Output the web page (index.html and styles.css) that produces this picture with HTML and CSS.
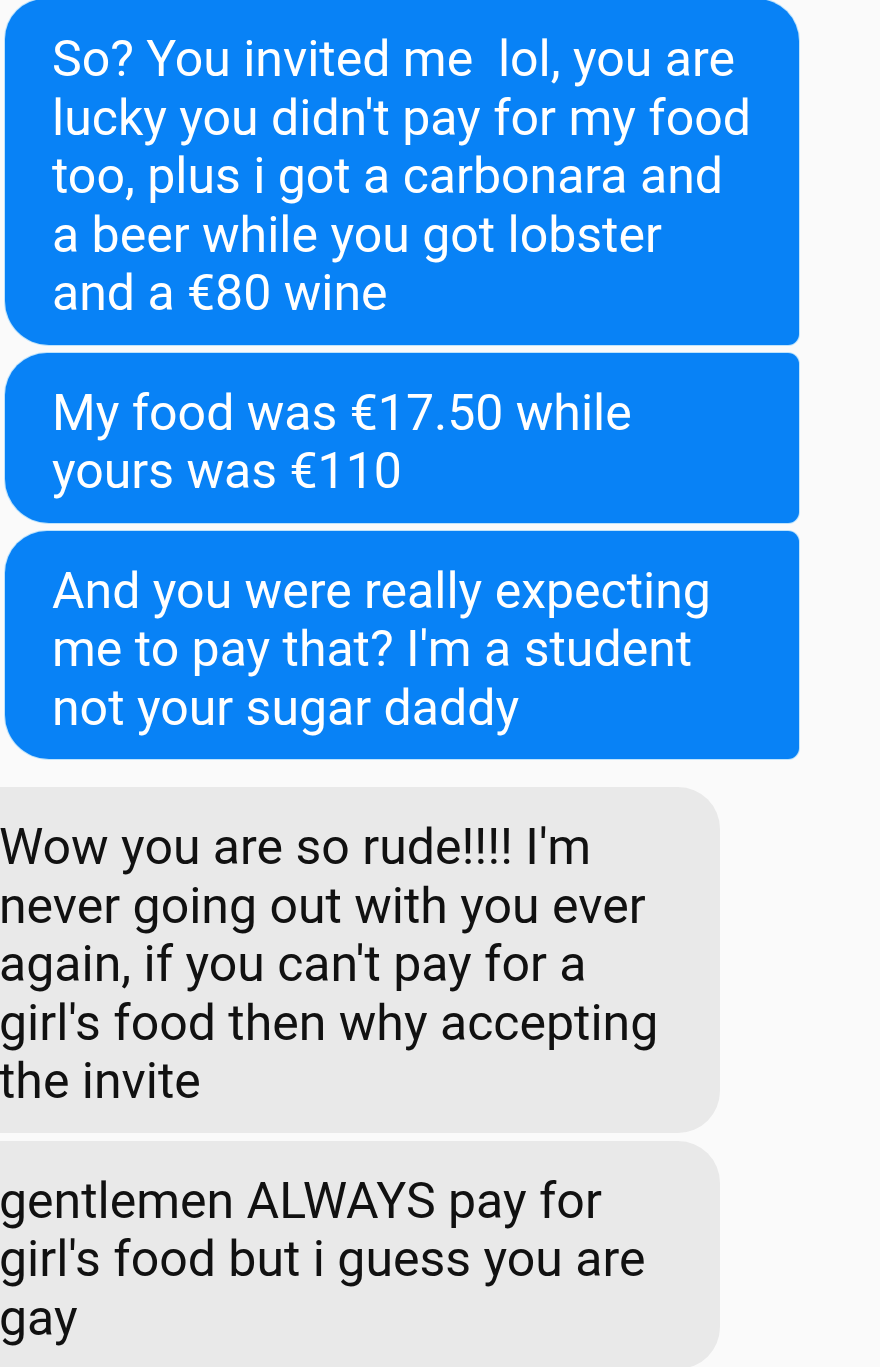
FILE: index.html
```html
<!DOCTYPE html>
<html lang="en">
<head>
  <meta charset="UTF-8" />
  <title>Chat</title>
  <link rel="stylesheet" href="styles.css">
</head>
<body>

  <div class="chat">
    <div class="group sent">
      <div class="bubble first">So? You invited me&nbsp; lol, you are<br>lucky you didn't pay for my food<br>too, plus i got a carbonara and<br>a beer while you got lobster<br>and a €80 wine</div>
      <div class="bubble">My food was €17.50 while<br>yours was €110</div>
      <div class="bubble">And you were really expecting<br>me to pay that? I'm a student<br>not your sugar daddy</div>
    </div>

    <div class="group received">
      <div class="bubble">Wow you are so rude!!!! I'm<br>never going out with you ever<br>again, if you can't pay for a<br>girl's food then why accepting<br>the invite</div>
      <div class="bubble">gentlemen ALWAYS pay for<br>girl's food but i guess you are<br>gay</div>
    </div>
  </div>

</body>
</html>
```

FILE: styles.css
```css
body {
  margin: 0;
  background-color: #fafafa;
  font-family: 'Roboto', 'Liberation Sans', sans-serif;
  overflow-x: hidden;
}

.chat {
  display: flex;
  flex-direction: column;
  gap: 28px;
}

.group {
  display: flex;
  flex-direction: column;
  gap: 8px;
}

.bubble {
  font-size: 50px;
  line-height: 58.5px;
  padding: 31px 20px 22px 47px;
  white-space: nowrap;
}

/* Blue: mine */
.sent .bubble {
  margin-left: 5px;
  width: 727px;
  background-color: #0882f6;
  color: #fff;
  border-radius: 42px 11px 11px 44px;
  box-shadow: 0 0 0 1px #bfe3fb;
}

.sent .bubble.first {
  border-radius: 40px 42px 11px 44px;
  margin-top: -1px;
}

/* Gray: hers */
.received .bubble {
  margin-left: -48px;
  width: 701px;
  background-color: #e9e9e9;
  color: #111;
  border-radius: 40px 42px 42px 40px;
}
```
